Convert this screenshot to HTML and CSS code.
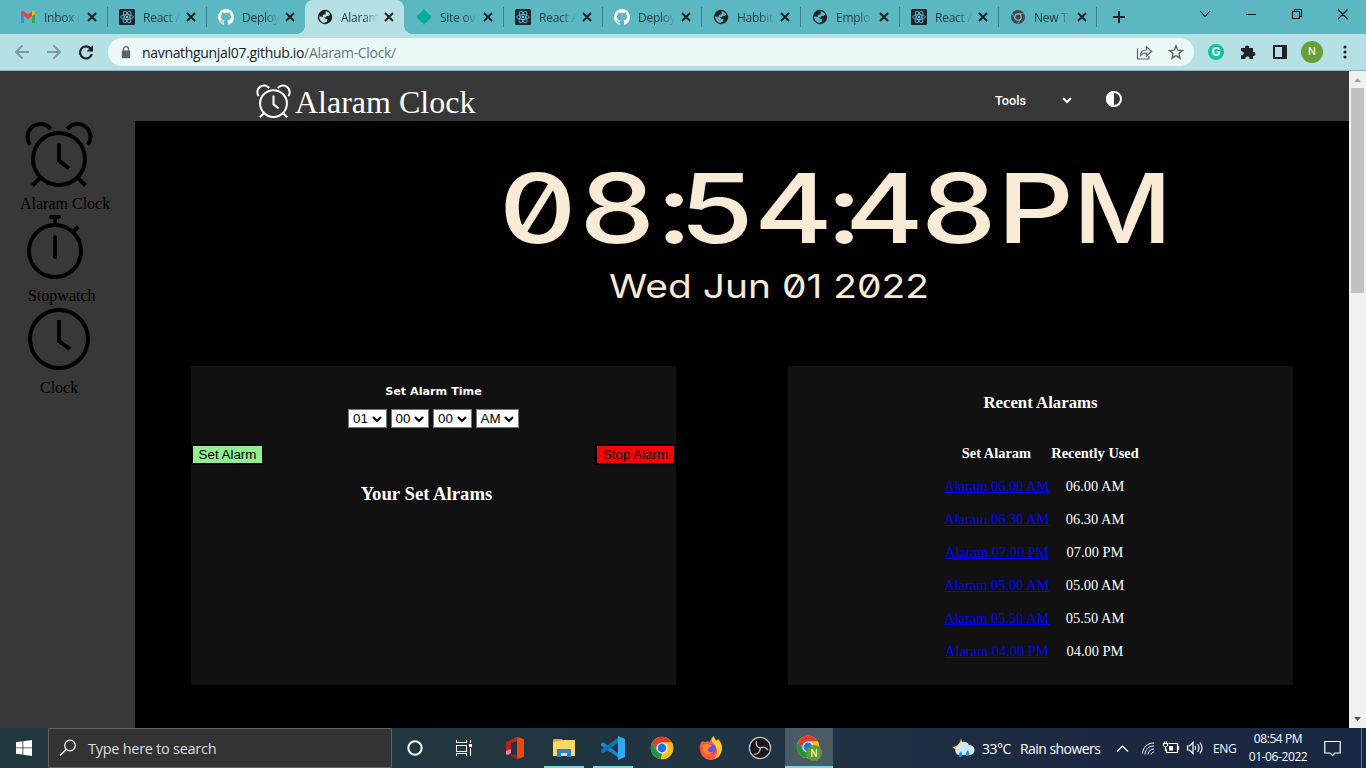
FILE: index.html
```
<!DOCTYPE html>
<html lang="en">
<head>
<meta charset="utf-8">
<title>Alaram Clock</title>
<link rel="stylesheet" href="styles.css">
</head>
<body>
<svg class="defs" width="0" height="0" aria-hidden="true">
  <symbol id="gmail" viewBox="0 0 16 16"><path fill="#4285f4" d="M1 3h3v11H2a1 1 0 0 1-1-1z"/><path fill="#34a853" d="M12 3h3v10a1 1 0 0 1-1 1h-2z"/><path fill="#ea4335" d="M1 4c0-2 1.500-2.500 3-1.500l4 3 4-3v4.500l-4 3-4-3-3-2z"/><path fill="#fbbc04" d="M12 2.500c1.500-1 3-.3 3 1.500v1l-3 2z"/></symbol>
  <symbol id="react" viewBox="0 0 16 16"><rect width="16" height="16" rx="1.500" fill="#20232a"/><g fill="none" stroke="#61bcd4" stroke-width=".9"><ellipse cx="8" cy="8" rx="6.300" ry="2.500"/><ellipse cx="8" cy="8" rx="6.300" ry="2.500" transform="rotate(60 8 8)"/><ellipse cx="8" cy="8" rx="6.300" ry="2.500" transform="rotate(120 8 8)"/></g><circle cx="8" cy="8" r="1.200" fill="#61dafb"/></symbol>
  <symbol id="github" viewBox="0 0 16 16"><path fill="#fff" d="M8 0C3.580 0 0 3.580 0 8c0 3.540 2.290 6.530 5.470 7.590.4.07.55-.17.55-.38 0-.19-.01-.82-.01-1.490-2.010.37-2.530-.49-2.690-.94-.09-.23-.48-.94-.82-1.130-.28-.15-.68-.52-.01-.53.63-.01 1.080.58 1.230.82.72 1.210 1.870.87 2.330.66.07-.52.28-.87.51-1.070-1.780-.2-3.640-.89-3.640-3.950 0-.87.31-1.590.82-2.150-.08-.2-.36-1.020.08-2.120 0 0 .67-.21 2.200.82a7.600 7.600 0 0 1 4 0c1.530-1.040 2.200-.82 2.200-.82.44 1.100.16 1.920.08 2.120.51.56.82 1.270.82 2.150 0 3.070-1.870 3.750-3.650 3.950.29.25.54.73.54 1.480 0 1.070-.01 1.930-.01 2.200 0 .21.15.46.55.38A8 8 0 0 0 16 8c0-4.420-3.580-8-8-8"/></symbol>
  <symbol id="globe" viewBox="0 0 16 16"><circle cx="8" cy="8" r="7.200" fill="#202124"/><path fill="currentColor" d="M8.500 2.200c2 .1 4 1.500 4.700 3.200l-1.700 1.700-1.900-.2-.7 1.300-2.700.3-.7-1.900 1.300-1.200 1.700.2.200-1.700zM2.200 7.300l3.700.7 2.600 1.800 2 .5-.6 2.200-1.800 1-.7.5C4.300 13.700 2.100 10.800 2.200 7.300"/></symbol>
  <symbol id="diamond" viewBox="0 0 16 16"><path fill="#00ad9f" d="M8 .3 15.700 8 8 15.700.3 8z"/></symbol>
  <symbol id="graychrome" viewBox="0 0 16 16"><circle cx="8" cy="8" r="7" fill="#41494d"/><circle cx="8" cy="8" r="3.200" fill="#41494d" stroke="#79bfc8" stroke-width="1.200"/><path stroke="#79bfc8" stroke-width=".7" d="M8 4.600h6.500M5.100 9.700 2 4.500M10.900 9.700 7.500 15"/></symbol>
  <symbol id="x" viewBox="0 0 16 16"><path d="M4 4l8 8M12 4l-8 8" stroke="#202124" stroke-width="1.900"/></symbol>
  <symbol id="chrome" viewBox="0 0 24 24"><circle cx="12" cy="12" r="11.200" fill="#fbc116"/><path fill="#e33b2e" d="M2.300 6.400A11.200 11.200 0 0 1 21.700 6.400H12L7.100 14.800z"/><path fill="#229342" d="M2.300 6.400 7.200 14.800 12 17.600l-1.300 5.500A11.200 11.200 0 0 1 2.300 6.400"/><path fill="#fbc116" d="M12 6.400h9.700A11.200 11.200 0 0 1 11.700 23.200l5.200-8.400z"/><circle cx="12" cy="12" r="5.600" fill="#fff"/><circle cx="12" cy="12" r="4.400" fill="#1a73e8"/></symbol>
  <symbol id="alarm" viewBox="0 0 64 64" overflow="visible"><g fill="none" stroke="currentColor" stroke-width="4"><circle cx="32" cy="36" r="26"/><path d="M32 20.500V37.500L42 45.500M13.700 54.300 5.500 62.500M50.300 54.300l8.200 8.200M3.300 21.700A11.400 11.400 0 0 1 23.600 5.900M60.700 21.700A11.400 11.400 0 0 0 40.400 5.900"/></g></symbol>
  <symbol id="chev" viewBox="0 0 10 8"><path d="M1 2l4 4 4-4" fill="none" stroke="currentColor" stroke-width="2"/></symbol>
</svg>

<header class="tabs">
  <div class="tab"><svg><use href="#gmail"/></svg><span>Inbox (</span><svg class="x"><use href="#x"/></svg></div>
  <div class="tab"><svg><use href="#react"/></svg><span>React A</span><svg class="x"><use href="#x"/></svg></div>
  <div class="tab nosep"><svg><use href="#github"/></svg><span>Deploy</span><svg class="x"><use href="#x"/></svg></div>
  <div class="tab active"><svg><use href="#globe"/></svg><span>Alaram</span><svg class="x"><use href="#x"/></svg></div>
  <div class="tab"><svg><use href="#diamond"/></svg><span>Site ov</span><svg class="x"><use href="#x"/></svg></div>
  <div class="tab"><svg><use href="#react"/></svg><span>React A</span><svg class="x"><use href="#x"/></svg></div>
  <div class="tab"><svg><use href="#github"/></svg><span>Deploy</span><svg class="x"><use href="#x"/></svg></div>
  <div class="tab"><svg><use href="#globe"/></svg><span>Habbit</span><svg class="x"><use href="#x"/></svg></div>
  <div class="tab"><svg><use href="#globe"/></svg><span>Emplo</span><svg class="x"><use href="#x"/></svg></div>
  <div class="tab"><svg><use href="#react"/></svg><span>React A</span><svg class="x"><use href="#x"/></svg></div>
  <div class="tab last"><svg><use href="#graychrome"/></svg><span>New Ta</span><svg class="x"><use href="#x"/></svg></div>
  <svg class="plus" viewBox="0 0 16 16"><path d="M8 2v12M2 8h12" stroke="#202124" stroke-width="2"/></svg>
  <svg class="winctl" width="166" height="30" viewBox="1200 0 166 30" fill="none" stroke="#111" stroke-width="1.100"><path d="M1200 11l5 5.500 5-5.500M1246 14.500h10M1292.500 11.500h7v7h-7zM1294.500 11.500v-2h7v7h-2M1338 9.500l9.500 9.500M1347.500 9.500l-9.500 9.500"/></svg>
</header>

<nav class="toolbar">
  <svg class="navs" width="90" height="20" viewBox="10 42 90 20" fill="none" stroke="#7f9ba0" stroke-width="1.900"><path d="M29 52H16M22.500 45.500 16 52l6.500 6.500M47 52h13M53.500 45.500 60 52l-6.500 6.500"/><path stroke="#202124" stroke-width="2.200" d="M90.500 48.500A6 6 0 1 0 91.800 54"/><path fill="#202124" stroke="none" d="M93 45v6.500h-6.500z"/></svg>
  <div class="omnibox">
    <svg width="10" height="13" viewBox="0 0 10 13"><rect x=".8" y="4.500" width="8.400" height="7.700" rx="1" fill="#5f6368"/><path d="M2.500 5V3.200a2.500 2.500 0 0 1 5 0V5" fill="none" stroke="#5f6368" stroke-width="1.300"/></svg>
    <span class="url">navnathgunjal07.github.io<i>/Alaram-Clock/</i></span>
    <svg class="share" width="50" height="20" viewBox="1135 42 50 20" fill="none" stroke="#5f6368" stroke-width="1.200"><path d="M1137.500 48.500v10.500h11.500v-3M1140.500 55.500c0-4 2.500-5.500 6-5.500v-3.200l5.200 4.700-5.200 4.500v-3c-3 0-4.500.5-6 2.500z"/><path stroke-width="1.400" d="m1176 45.800 1.800 4.300 4.700.4-3.600 3.100 1.100 4.600-4-2.500-4 2.500 1.100-4.600-3.600-3.100 4.700-.4z"/></svg>
  </div>
  <div class="gram">G</div>
  <svg width="16" height="16" viewBox="0 0 16 16"><path fill="#202124" d="M1 4h4.200a2 2 0 1 1 3.900 0H13v4a2 2 0 1 1 0 3.900V15H9.400a2 2 0 1 0-3.900 0H1v-3.800a2 2 0 1 0 0-3.700z"/></svg>
  <svg width="14" height="14" viewBox="0 0 14 14"><path fill="#202124" d="M0 0h14v14H0zM2 2v10h7V2z" fill-rule="evenodd"/></svg>
  <div class="avatar">N</div>
  <svg width="4" height="14" viewBox="0 0 4 14" fill="#202124"><circle cx="2" cy="2" r="1.600"/><circle cx="2" cy="7" r="1.600"/><circle cx="2" cy="12" r="1.600"/></svg>
</nav>

<div class="viewport">
  <div class="page">
    <div class="appbar">
      <svg class="logo"><use href="#alarm"/></svg>
      <h1>Alaram Clock</h1>
      <div class="tools"><span>Tools</span><svg width="10" height="8"><use href="#chev"/></svg></div>
      <svg class="contrast" width="16" height="16" viewBox="0 0 16 16"><circle cx="8" cy="8" r="7" fill="none" stroke="#fff" stroke-width="2"/><path fill="#fff" d="M8 0a8 8 0 0 0 0 16z"/></svg>
    </div>
    <div class="cols">
      <aside>
        <div class="item"><svg><use href="#alarm"/></svg><span class="l1">Alaram Clock</span></div>
        <div class="item"><svg viewBox="27 215 64 64" fill="none" stroke="#000" stroke-width="4"><circle cx="55" cy="251" r="26"/><path d="M55 217v8M73 232l5-5" /><path stroke-linecap="round" d="M51 217h8M55 237v20"/></svg><span class="l2">Stopwatch</span></div>
        <div class="item"><svg viewBox="27 307 64 64" fill="none" stroke="#000" stroke-width="4"><circle cx="59" cy="339" r="29"/><path d="M59 320v21l11 8"/></svg><span class="l3">Clock</span></div>
      </aside>
      <main>
        <svg class="time" width="668" height="82" viewBox="500 165 668 82"><text transform="scale(1.250 1)" y="243" x="399.200 463.600 524.800 543.600 603.200 660.800 676 736.800 797.600">08:54:48P</text><text transform="scale(1.130 1)" y="243" x="949.500">M</text></svg>
        <svg class="date" width="330" height="40" viewBox="605 266 330 40"><text x="609" y="298" textLength="320" lengthAdjust="spacingAndGlyphs">Wed Jun 01 2022</text></svg>
        <div class="panels">
          <section class="set">
            <h4>Set Alarm Time</h4>
            <div class="selects">
              <div class="sel">01<svg><use href="#chev"/></svg></div><div class="sel">00<svg><use href="#chev"/></svg></div><div class="sel">00<svg><use href="#chev"/></svg></div><div class="sel am">AM<svg><use href="#chev"/></svg></div>
            </div>
            <div class="buttons"><button class="go">Set Alarm</button><button class="stop">Stop Alarm</button></div>
            <h3>Your Set Alrams</h3>
          </section>
          <section class="recent">
            <h3>Recent Alarams</h3>
            <div class="grid">
              <b>Set Alaram</b><b>Recently Used</b>
              <a>Alaram 06.00 AM</a><span>06.00 AM</span>
              <a>Alaram 06.30 AM</a><span>06.30 AM</span>
              <a>Alaram 07.00 PM</a><span>07.00 PM</span>
              <a>Alaram 05.00 AM</a><span>05.00 AM</span>
              <a>Alaram 05.50 AM</a><span>05.50 AM</span>
              <a>Alaram 04.00 PM</a><span>04.00 PM</span>
            </div>
          </section>
        </div>
      </main>
    </div>
  </div>
  <div class="scroll"><svg width="17" height="17"><path fill="#a3a3a3" d="M5 11h7L8.500 7z"/></svg><div class="thumb"></div><svg class="down" width="17" height="17"><path fill="#505050" d="M5 6h7l-3.500 4z"/></svg></div>
</div>

<footer class="taskbar">
  <div class="start"><svg width="16" height="16" viewBox="0 0 16 16" fill="#fff"><path d="M0 2.200 6.500 1.300v6.200H0zM7.300 1.200 16 0v7.500H7.300zM0 8.300h6.500v6.300L0 13.700zM7.300 8.300H16V16l-8.700-1.200z"/></svg></div>
  <div class="search"><svg width="18" height="18" viewBox="0 0 18 18" fill="none" stroke="#eee" stroke-width="1.300"><circle cx="11" cy="6.500" r="5.300"/><path d="M7.300 10.300 1 16.500"/></svg><span>Type here to search</span></div>
  <div class="app edge"><svg width="16" height="16"><circle cx="8" cy="8" r="6.700" fill="none" stroke="#fff" stroke-width="2"/></svg></div>
  <div class="app edge"><svg width="16" height="16" viewBox="0 0 16 16" fill="none" stroke="#fff" stroke-width="1.100"><path d="M.5 0v2.500h10V0M.5 5.500h10v6H.5zM.5 16v-2.500h10V16M14.500 0v3M14.500 8v8"/><path fill="#fff" stroke="none" d="M13 4h3v3h-3z"/></svg></div>
  <div class="app"><svg width="20" height="24" viewBox="0 0 20 24"><path fill="#c41f1f" d="M1 6 12 1v4L6 7v9l-5 3z"/><path fill="#e887a0" d="M1 15l5-2v4l-3 2-2-1z"/><path fill="#b11c24" d="m4 19 8-.5V23z"/><path fill="#e64a0e" d="m12 1 7 2v18l-7 2z"/></svg></div>
  <div class="app on"><svg width="22" height="20" viewBox="0 0 22 20"><path fill="#e5a310" d="M0 1h9l2 3H0z"/><path fill="#ffd766" d="M0 4l11-2h11v16H0z"/><path fill="#2484d1" d="M4 19v-8h14v8h-4v-4H8v4z"/></svg></div>
  <div class="app on code"><svg width="24" height="24" viewBox="0 0 24 24"><path fill="#198ad5" d="m0 8 2-2 16 12v4L0 9.500z"/><path fill="#1072b8" d="m0 15.500 2 2L18 6V1L0 14z"/><path fill="#31a9f4" d="m17 0 7 3v18l-7 3z"/></svg></div>
  <div class="app"><svg width="24" height="24"><use href="#chrome"/></svg></div>
  <div class="app"><svg width="24" height="24" viewBox="0 0 24 24"><path fill="#ff573d" d="M1 14C0 9 2 7 3 5l3 1c2-1 4-1 5 0 0-3 2-5 4-6 0 3 2 4 3 5l1-2c3 3 4 6 4 9 0 7-5 12-11 12S2 20 1 14"/><path fill="#ffcb31" d="M13 6c-1-3 1-5 2-6 0 3 2 4 3 5l1-2c3 3 4 6 4 9 0 6-4 10-8 11 4-4 5-11-2-17"/><circle cx="12" cy="13" r="5" fill="#7949dc"/><path fill="#ff8b20" d="M4 9c4-2 6 0 9 0-1 2-3 2-4 4s2 4 5 3c-3 4-9 3-10-2z"/></svg></div>
  <div class="app"><svg width="24" height="24" viewBox="0 0 24 24"><circle cx="12" cy="12" r="10.600" fill="#17151a" stroke="#c4c4c4" stroke-width="1.300"/><path fill="none" stroke="#c4c4c4" stroke-width="1.300" d="M8.500 5c-1 3.500.5 6 3.500 7 3-1.500 6-.8 8 2M12 12c.5 3.500-1.500 6-5.500 6.500"/></svg></div>
  <div class="app current on"><svg width="26" height="26" viewBox="0 0 26 26"><use href="#chrome" width="24" height="24"/><circle cx="18" cy="18" r="8" fill="#5c9c33"/><text x="18" y="21.500" text-anchor="middle">N</text></svg></div>
  <div class="tray">
    <svg width="24" height="23" viewBox="0 0 24 23"><path fill="#fbc82c" d="M10 0c0 5 3 7 7 8 0 5-11 7-16 2 5 0 9-4 9-10"/><path fill="#cce8fb" d="M7 18a5 5 0 0 1 0-9 6 6 0 0 1 11-1 5 5 0 0 1 1 10z"/><path fill="#2a8be5" d="M10 14c-4 4-2 7 0 6s1-4 0-6M17 13c-4 4-2 7 0 6s1-4 0-6"/></svg>
    <span class="temp">33°C</span><span class="rain">Rain showers</span>
    <svg class="icons" width="90" height="20" viewBox="1115 738 90 20" fill="none" stroke="#fff" stroke-width="1.200"><path d="m1117 751.500 5.500-5.500 5.500 5.500"/><g stroke-width="1"><path d="M1142.500 753.500c.5-6.500 5-10.500 11.500-10.500M1145 754.500c.5-5.500 3.500-8.500 9-8.500M1148 754.500c.4-3.500 2.500-5.500 6-5.500M1151 754.500c.2-1.500 1.500-2.500 3-2.500"/></g><path d="M1168.500 743.500h9v9h-11v-3M1178.500 746v4M1163.500 743.500h4v2q-2 3-4 0zM1164.500 741.500v2M1166.500 741.500v2M1165.500 747v4"/><path fill="#fff" stroke="none" d="M1169 746h4v4.500h-4z"/><path d="M1187.500 746h2l3.500-3.500v11l-3.500-3.500h-2zM1195 746q1.500 2 0 4M1197.500 744q3 4 0 8M1200 742.500q4 5.500 0 11"/></svg>
    <span class="eng">ENG</span>
    <div class="clock"><span>08:54 PM</span><span>01-06-2022</span></div>
    <svg width="17" height="17" viewBox="0 0 17 17" fill="none" stroke="#fff" stroke-width="1.200"><path d="M.8 1.500h15.400v11.500H11l-2.500 2.500L6 13H.8z"/></svg>
  </div>
  <div class="peek"></div>
</footer>
</body>
</html>
```
FILE: styles.css
```
* { box-sizing: border-box; }
body { margin: 0; width: 1366px; height: 768px; overflow: hidden; display: flex; flex-direction: column; background: #000; font-family: "Open Sans", sans-serif; }
svg { flex: none; display: block; }
.defs { position: absolute; }
h1, h3, h4 { margin: 0; }

.tabs { height: 34px; flex: none; display: flex; background: #5bb7c1; padding-left: 8px; }
.tab { width: 99px; flex: none; display: flex; align-items: center; padding-left: 12px; position: relative; font-size: 12px; color: #203c40; }
.tab svg { width: 16px; height: 16px; color: #5bb7c1; }
.tab.active svg { color: #b6e1e4; }
.tab span { width: 37px; margin-left: 8px; white-space: nowrap; letter-spacing: -.25px; -webkit-mask-image: linear-gradient(90deg, #000 60%, transparent); mask-image: linear-gradient(90deg, #000 60%, transparent); }
.tab .x { margin-left: 3px; }
.tab::after { content: ""; position: absolute; right: -1px; top: 7px; width: 1px; height: 20px; background: #3a7e87; }
.tab.last::after { right: 0; }
.tab.nosep::after { display: none; }
.tab.active { background: #b6e1e4; border-radius: 8px 8px 0 0; }
.tab.active::after, .tab.active::before { content: ""; position: absolute; top: auto; bottom: 0; width: 8px; height: 8px; }
.tab.active::before { left: -8px; background: radial-gradient(circle at 0 0, #5bb7c1 7.500px, #b6e1e4 8px); }
.tab.active::after { right: -8px; background: radial-gradient(circle at 8px 0, #5bb7c1 7.500px, #b6e1e4 8px); }
.plus { width: 16px; height: 16px; margin: 9px 0 0 14px; }
.winctl { margin-left: auto; }

.toolbar { height: 37px; flex: none; display: flex; align-items: center; background: #b6e1e4; border-bottom: 1px solid #91b5b8; padding: 0 19px 0 10px; }
.omnibox { width: 1086px; flex: none; height: 28px; margin-left: 8px; border-radius: 14px; background: #ebf8f8; display: flex; align-items: center; padding: 0 9px 0 13px; font-size: 14px; color: #202124; }
.url { margin-left: 11px; letter-spacing: -.32px; }
.url i { font-style: normal; color: #687679; }
.share { margin-left: auto; }
.gram { width: 16px; height: 16px; flex: none; margin: 0 16px 0 14px; border-radius: 50%; background: #15c39a; color: #fff; font: bold 12px/16px "Inter", sans-serif; text-align: center; }
.toolbar > svg:nth-of-type(3) { margin-left: 17px; }
.avatar { width: 22px; height: 22px; margin: 0 20px 0 14px; border-radius: 50%; background: #689f38; color: #fff; font: 11px/22px Roboto, sans-serif; text-align: center; flex: none; }

.viewport { height: 657px; flex: none; display: flex; }
.page { width: 1349px; flex: none; display: flex; flex-direction: column; font-family: "Liberation Serif", serif; }
.appbar { height: 50px; flex: none; display: flex; background: #383838; color: #fff; padding-left: 257px; }
.logo { width: 33px; height: 33px; margin-top: 14px; overflow: visible; }
.appbar h1 { width: 181px; margin: 13px 0 0 5px; font-size: 32px; line-height: 37px; font-weight: 400; white-space: nowrap; }
.tools { width: 77px; height: 20px; margin: 19px 0 0 519px; display: flex; align-items: center; justify-content: space-between; font: 500 12.700px Roboto, sans-serif; }
.contrast { margin: 20px 0 0 34px; }
.cols { flex: 1; display: flex; }
aside { width: 135px; flex: none; background: #383838; padding-top: 2px; }
.item { height: 92px; padding-left: 27px; font-size: 16px; line-height: 18px; color: #000; }
.item svg { width: 64px; height: 64px; overflow: visible; }
.item span { display: block; margin-top: 8px; white-space: nowrap; }
.l1 { margin-left: -7px; }
.l2 { margin-left: 1px; }
.l3 { margin-left: 13px; }
main { flex: 1; background: #000; padding: 44px 56px 0; color: #fff; }
.time { margin-left: 309px; overflow: visible; }
.time text { font: 500 96px "Inter", sans-serif; font-feature-settings: "zero"; fill: #faebd7; }
.date { margin: 19px 0 0 414px; }
.date text { font: 400 33px "Inter", sans-serif; font-feature-settings: "zero"; fill: #faebd7; }
.panels { display: flex; justify-content: space-between; margin-top: 60px; }
.set, .recent { height: 319px; background: #111; }
.set { width: 485px; text-align: center; }
.recent { width: 505px; padding-top: 26px; }
.set h4 { padding-top: 18px; font: bold 11.200px/15px "DejaVu Sans", sans-serif; }
.selects { display: flex; justify-content: center; gap: 4px; margin-top: 10px; }
.sel { width: 38.500px; height: 19px; display: flex; align-items: center; justify-content: space-between; padding: 0 4px; background: #fff; border: 1px solid #767676; color: #000; font: 13.330px "Liberation Sans", sans-serif; }
.sel svg { width: 10px; height: 8px; }
.sel.am { width: 43.500px; padding: 0 4px; }
.buttons { display: flex; justify-content: space-between; margin-top: 16px; }
.buttons button { height: 21px; padding: 0 5px; border: 2px solid #000; font: 13.330px "Liberation Sans", sans-serif; color: #000; }
.go { width: 73px; background: #90ee90; }
.stop { width: 81px; background: red; }
.set h3 { font-size: 18.720px; line-height: 22px; margin: 18px 14px 0 0; }
.recent h3 { font-size: 16.800px; line-height: 22px; text-align: center; }
.grid { display: grid; grid-template-columns: 108px 88px; grid-auto-rows: 33px; justify-content: start; margin: 23px 0 0 155px; font-size: 14.400px; line-height: 33px; text-align: center; white-space: nowrap; }
.grid b:first-child { text-align: right; padding-right: 20px; }
.grid a { color: #00f; text-decoration: underline; }
.scroll { width: 17px; background: #f1f1f1; display: flex; flex-direction: column; }
.thumb { width: 13px; height: 205px; margin-left: 2px; background: #c1c1c1; }
.down { margin-top: auto; }

.taskbar { height: 40px; flex: none; display: flex; background: linear-gradient(90deg, #20373f 0, #21363f 35%, #203343 58%, #1c2841 80%, #1a2743 100%); color: #fff; }
.start { width: 48px; display: flex; align-items: center; justify-content: center; }
.search { width: 344px; background: #333; border: 1px solid #626262; display: flex; align-items: center; padding-left: 10px; font-size: 14.500px; color: #ddd; letter-spacing: -.27px; }
.search span { margin-left: 11px; }
.app { width: 49.100px; flex: none; display: flex; align-items: center; justify-content: center; }
.app.edge { padding-right: 3px; }
.app.on { box-shadow: inset 0 -2px #76d8e0; }
.app.on:not(.current) { width: 40px; margin: 0 4.550px; }
.app.current { background: #4b5b66; width: 48px; }
.app text { font: 10px Roboto, sans-serif; fill: #fff; }
.tray { margin-left: auto; display: flex; align-items: center; padding-right: 20px; font-size: 14px; white-space: nowrap; }
.temp { width: 31px; margin-left: 7px; letter-spacing: -.5px; }
.rain { width: 82px; margin-left: 7px; letter-spacing: -.55px; }
.icons { margin-left: 13px; }
.eng { width: 24px; margin-left: 8px; font-size: 12px; letter-spacing: -.3px; }
.clock { width: 60px; margin: 0 16px 0 11px; display: flex; flex-direction: column; align-items: center; font-size: 12px; line-height: 18px; letter-spacing: -.4px; }
.peek { width: 5px; border-left: 1px solid #6b7488; }
```
